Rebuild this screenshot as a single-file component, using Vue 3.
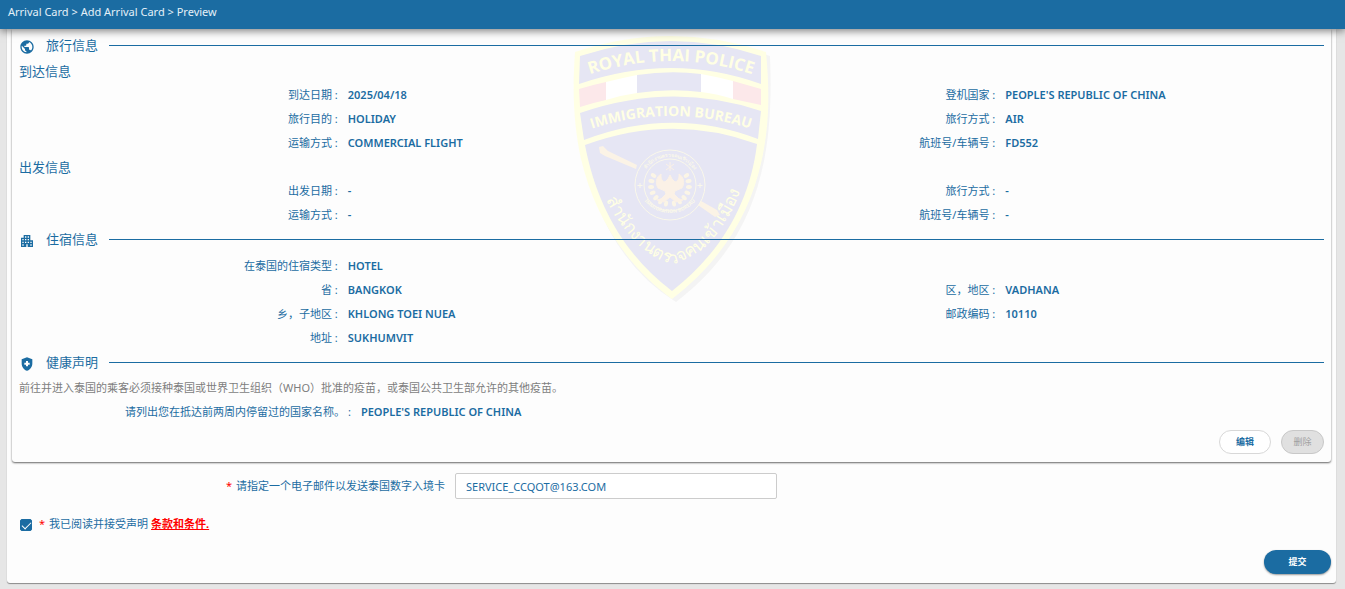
<script setup>
import { ref } from 'vue'

const arrival = [
  { label: '到达日期', value: '2025/04/18' },
  { label: '登机国家', value: "PEOPLE'S REPUBLIC OF CHINA" },
  { label: '旅行目的', value: 'HOLIDAY' },
  { label: '旅行方式', value: 'AIR' },
  { label: '运输方式', value: 'COMMERCIAL FLIGHT' },
  { label: '航班号/车辆号', value: 'FD552' },
]
const departure = [
  { label: '出发日期', value: '-' },
  { label: '旅行方式', value: '-' },
  { label: '运输方式', value: '-' },
  { label: '航班号/车辆号', value: '-' },
]
const stay = [
  { label: '在泰国的住宿类型', value: 'HOTEL', wide: true },
  { label: '省', value: 'BANGKOK' },
  { label: '区，地区', value: 'VADHANA' },
  { label: '乡，子地区', value: 'KHLONG TOEI NUEA' },
  { label: '邮政编码', value: '10110' },
  { label: '地址', value: 'SUKHUMVIT', wide: true },
]
const leaves = [0, 1, 2, 3, 4, 5, 6]
const email = ref('SERVICE_CCQOT@163.COM')
const accepted = ref(true)
</script>

<template>
  <div class="page">
    <header class="topbar">Arrival Card &gt; Add Arrival Card &gt; Preview</header>

    <main class="sheet">
      <svg class="emblem" viewBox="0 0 200 270" aria-hidden="true">
        <defs>
          <path id="arc-top" d="M10 43Q99 11 188 43" />
          <path id="arc-mid" d="M10 98Q99 66 188 98" />
          <path id="arc-thai" d="M26 146C42 190 68 221 101 230C136 221 160 186 176 138" />
          <path id="arc-seal" d="M65 146A33 33 0 0 0 131 146" />
          <path id="arc-seal-top" d="M69 152A29 29 0 0 1 127 152" />
        </defs>
        <path class="shade" d="M6 20Q101 -10 198 22C202 120 188 204 104 268Q26 220 6 100Z" />
        <path class="gold-rim" d="M3 18Q99 -14 194 18C198 60 197 92 190 125C178 182 148 228 100 265C52 230 22 180 9 125C2 92 0 60 3 18Z" />
        <path class="navy" d="M8 22Q100 -8 189 22L189 50Q100 18 7 50Z" />
        <path class="red" d="M7 55Q20 51 34 48V66Q20 69 8 73Z" />
        <path class="white" d="M34 48Q50 44 65 41V59Q50 61 34 66Z" />
        <path class="navy" d="M65 41Q98 36 129 40V58Q98 54 65 59Z" />
        <path class="white" d="M129 40Q146 43 161 47V65Q146 60 129 58Z" />
        <path class="red" d="M161 47L189 55V71L161 65Z" />
        <path class="navy" d="M8 79Q100 47 189 77L186 105Q100 72 12 106Z" />
        <path class="navy" d="M13 111Q100 79 185 110C178 168 149 219 100 257C54 222 25 174 13 111Z" />
        <path class="sword" d="M27 113L31 112 36 117 65 131 64 135 33 122 28 119ZM129 167L145 176 148 181 143 183 126 171Z" />
        <text class="band top"><textPath href="#arc-top" startOffset="50%">ROYAL THAI POLICE</textPath></text>
        <text class="band mid"><textPath href="#arc-mid" startOffset="50%">IMMIGRATION BUREAU</textPath></text>
        <circle class="ring" cx="98" cy="151" r="35" />
        <circle class="ring" cx="98" cy="151" r="26" />
        <text class="seal"><textPath href="#arc-seal" startOffset="50%">IMMIGRATION BUREAU</textPath></text>
        <text class="seal"><textPath href="#arc-seal-top" startOffset="50%">สำนักงานตรวจคนเข้าเมือง</textPath></text>
        <path class="plus" d="M68 149V154M65.500 151.500H70.500M128 149V154M125.500 151.500H130.500" />
        <g v-for="n in leaves" :key="n" class="leaf">
          <ellipse cx="79" cy="151" rx="3" ry="2" :transform="`rotate(${30 - n * 18} 98 151)`" />
          <ellipse cx="117" cy="151" rx="3" ry="2" :transform="`rotate(${n * 18 - 30} 98 151)`" />
        </g>
        <path class="garuda" d="M98 141L100 145 103 148C107 147 107 143 107 140C112 143 113 149 110 154L103 157 102 160 107 165 111 166 104 168 98 163 92 168 85 166 89 165 94 160 93 157 86 154C83 149 84 143 89 140C89 143 89 147 93 148L96 145ZM98 128V137M94 130L102 136M102 130L94 136" />
        <text class="thai"><textPath href="#arc-thai" startOffset="50%">สำนักงานตรวจคนเข้าเมือง</textPath></text>
      </svg>

      <section class="card">
        <h2 class="heading">
          <svg viewBox="0 0 24 24" aria-hidden="true"><path d="M12 2C6.480 2 2 6.480 2 12s4.480 10 10 10 10-4.480 10-10S17.520 2 12 2zm-1 17.930c-3.950-.49-7-3.850-7-7.930 0-.62.080-1.210.21-1.790L9 15v1c0 1.100.9 2 2 2v1.930zm6.900-2.540c-.26-.81-1-1.390-1.900-1.390h-1v-3c0-.55-.45-1-1-1H8v-2h2c.55 0 1-.45 1-1V7h2c1.100 0 2-.9 2-2v-.41c2.930 1.190 5 4.060 5 7.410 0 2.080-.8 3.970-2.100 5.390z" /></svg>
          <span>旅行信息</span>
        </h2>
        <h3>到达信息</h3>
        <dl class="fields">
          <div v-for="f in arrival" :key="f.label"><dt>{{ f.label }} :</dt><dd>{{ f.value }}</dd></div>
        </dl>
        <h3>出发信息</h3>
        <dl class="fields">
          <div v-for="f in departure" :key="f.label"><dt>{{ f.label }} :</dt><dd>{{ f.value }}</dd></div>
        </dl>

        <h2 class="heading">
          <svg viewBox="0 0 24 24" aria-hidden="true"><path d="M17 11V3H7v4H3v14h8v-4h2v4h8V11h-4zM7 19H5v-2h2v2zm0-4H5v-2h2v2zm0-4H5V9h2v2zm4 4H9v-2h2v2zm0-4H9V9h2v2zm0-4H9V5h2v2zm4 8h-2v-2h2v2zm0-4h-2V9h2v2zm0-4h-2V5h2v2zm4 12h-2v-2h2v2zm0-4h-2v-2h2v2z" /></svg>
          <span>住宿信息</span>
        </h2>
        <dl class="fields">
          <div v-for="f in stay" :key="f.label" :class="{ wide: f.wide }"><dt>{{ f.label }} :</dt><dd>{{ f.value }}</dd></div>
        </dl>

        <h2 class="heading">
          <svg viewBox="0 0 24 24" aria-hidden="true"><path d="M10.500 13H8v-3h2.500V7.500h3V10H16v3h-2.500v2.500h-3V13zM12 2L4 5v6.090c0 5.050 3.410 9.760 8 10.910 4.590-1.150 8-5.860 8-10.910V5l-8-3z" fill-rule="evenodd" /></svg>
          <span>健康声明</span>
        </h2>
        <p class="note">前往并进入泰国的乘客必须接种泰国或世界卫生组织（WHO）批准的疫苗，或泰国公共卫生部允许的其他疫苗。</p>
        <dl class="fields health">
          <div><dt>请列出您在抵达前两周内停留过的国家名称。 :</dt><dd>PEOPLE'S REPUBLIC OF CHINA</dd></div>
        </dl>
        <div class="actions">
          <button type="button" class="edit">编辑</button>
          <button type="button" class="remove" disabled>删除</button>
        </div>
      </section>

      <form @submit.prevent>
        <div class="email">
          <label for="email"><b class="star">*</b>请指定一个电子邮件以发送泰国数字入境卡</label>
          <div><input id="email" v-model="email" type="text" /></div>
        </div>
        <div class="consent">
          <input id="accept" v-model="accepted" type="checkbox" />
          <label for="accept"><b class="star">*</b>我已阅读并接受声明</label>
          <a href="#terms">条款和条件.</a>
        </div>
        <div class="submit"><button type="submit">提交</button></div>
      </form>
    </main>
  </div>
</template>

<style>
body {
  margin: 0;
  background: #e6e6e6;
}
</style>

<style scoped>
* {
  box-sizing: border-box;
}
.page {
  font: 11px/24px "Noto Sans", "Noto Sans CJK SC", sans-serif;
  color: #1b6ca2;
}
.topbar {
  position: relative;
  z-index: 2;
  height: 29px;
  padding-left: 8px;
  background: #1b6ca2;
  color: #e4f0f8;
  box-shadow: 0 2px 8px rgba(0, 0, 0, 0.5);
}
.sheet {
  position: relative;
  margin: 0 9px 6px 7px;
  padding: 0 5px 9px;
  background: #fdfdfd;
  border-radius: 0 0 3px 3px;
  box-shadow: 0 1px 1px rgba(0, 0, 0, 0.4);
}
.emblem {
  position: absolute;
  top: 5px;
  left: calc(50% - 100px);
  width: 200px;
  height: 270px;
}
.shade { fill: #f4f4f4; }
.gold-rim { fill: #ffffe4; }
.navy { fill: #e6e6f4; }
.red { fill: #fce8ea; }
.white { fill: #fff; }
.sword { fill: #fbf3e6; }
.band {
  fill: #ffffe4;
  font-family: "Liberation Sans Narrow", "Open Sans", sans-serif;
  font-weight: 700;
  text-anchor: middle;
}
.top { font-size: 17px; }
.mid { font-size: 14px; }
.thai {
  fill: #ffffe4;
  font-size: 17px;
  font-weight: 400;
  text-anchor: middle;
}
.ring {
  fill: none;
  stroke: #faf8ea;
  stroke-width: 1;
}
.seal {
  fill: #faf8ea;
  font-size: 5px;
  font-weight: 700;
  text-anchor: middle;
}
.plus {
  stroke: #faf8ea;
  stroke-width: 1;
}
.leaf { fill: #fbf5e6; }
.garuda {
  fill: #fbf1e6;
  stroke: #fbf1e6;
}
.card {
  position: relative;
  padding: 4px 2px 8px;
  border-radius: 0 0 3px 3px;
  box-shadow: 0 1px 2px rgba(0, 0, 0, 0.6);
}
h2,
h3,
p,
dl,
dd {
  margin: 0;
}
h2,
h3 {
  font-size: 13px;
  font-weight: 400;
}
h3,
.note {
  padding-left: 5px;
}
.heading {
  display: flex;
  align-items: center;
  gap: 11px;
  margin-bottom: 2px;
  padding: 0 5px;
}
.heading svg {
  width: 16px;
  height: 16px;
  margin-top: 4px;
  fill: #1b6ca2;
}
.heading::after {
  content: "";
  flex: 1;
  height: 1px;
  background: #1b6ca2;
}
.heading + .fields {
  margin-top: 3px;
}
.fields {
  display: grid;
  grid-template-columns: 1fr 1fr;
}
.fields > div {
  display: grid;
  grid-template-columns: 1fr 1fr;
}
.fields > .wide {
  grid-column: 1 / -1;
  grid-template-columns: 1fr 3fr;
}
.fields.health {
  grid-template-columns: 1fr;
}
.fields.health > div {
  grid-template-columns: 26% 1fr;
}
dt {
  padding-right: 5px;
  text-align: right;
}
dd {
  padding-left: 5px;
  font-weight: 600;
}
.note {
  color: #7d7d7d;
}
.actions {
  display: flex;
  justify-content: flex-end;
  gap: 10px;
  padding: 6px 5px 0;
}
button {
  height: 24px;
  border-radius: 12px;
  font: 700 9px/16px "Noto Sans", "Noto Sans CJK SC", sans-serif;
}
.edit {
  width: 52px;
  border: 1px solid #d8d8d8;
  background: #fff;
  color: #1b6ca2;
}
.remove {
  width: 43px;
  border: 1px solid #c8c8c8;
  background: #e0e0e0;
  color: #a0a0a0;
  font-weight: 400;
}
form {
  position: relative;
}
.email {
  display: grid;
  grid-template-columns: 1fr 1fr 1fr;
  margin: 0 -5px;
  padding-top: 11px;
}
.email label {
  padding: 1px 5px 0 0;
  text-align: right;
}
.email div {
  padding: 0 5px;
}
.email input {
  width: 100%;
  max-width: 322px;
  height: 26px;
  padding: 0 10px;
  border: 1px solid #ccc;
  border-radius: 2px;
  background: #fff;
  color: #1b6ca2;
  font: 11px "Noto Sans", sans-serif;
}
.star {
  margin-right: 4px;
  color: #f00;
  font-weight: 400;
}
.consent {
  display: flex;
  align-items: center;
  padding: 13px 8px 0;
}
.consent input {
  appearance: none;
  display: grid;
  place-items: center;
  width: 12px;
  height: 12px;
  margin: 2px 7px 0 0;
  border-radius: 2px;
  border: 1px solid #1b6ca2;
}
.consent input:checked {
  background: #1b6ca2;
}
.consent input:checked::after {
  content: "";
  width: 8px;
  height: 4px;
  margin-bottom: 2px;
  border: solid #fff;
  border-width: 0 0 1px 1px;
  transform: rotate(-45deg);
}
.consent a {
  margin-left: 3px;
  color: #f00;
  font-weight: 700;
}
.submit {
  display: flex;
  justify-content: flex-end;
  padding-top: 14px;
}
.submit button {
  width: 67px;
  border: 0;
  background: #1b6ca2;
  color: #fff;
  box-shadow: 0 1px 2px rgba(0, 0, 0, 0.4);
}
</style>
